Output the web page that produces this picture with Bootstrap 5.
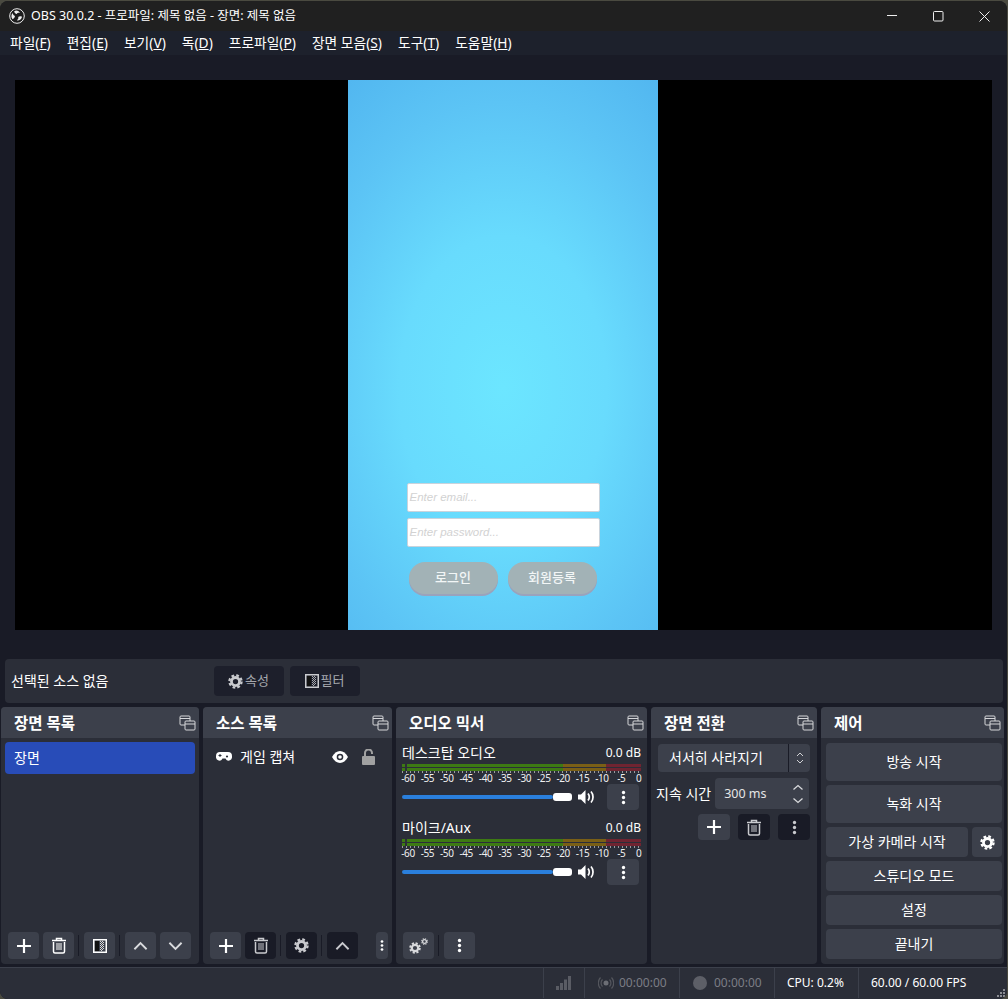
<!doctype html>
<html lang="ko"><head><meta charset="utf-8"><title>OBS</title>
<link rel="stylesheet" href="https://cdn.jsdelivr.net/npm/bootstrap@5.3.0/dist/css/bootstrap.min.css">
<style>
html,body{height:999px;overflow:hidden;background:#4a4a40;}
body{font-family:"Noto Sans","Noto Sans CJK KR",sans-serif;font-size:14px;line-height:18px;color:#fff;}
.app{width:1007px;height:998px;margin-top:1px;background:#191b26;border-radius:8px;overflow:hidden;}
.tbar{height:30px;background:#202020;font-size:12.5px;padding-left:9px;flex:none;}
.tbar svg.logo{margin-right:6px}
.wbtns{margin-left:auto}
.wbtn{width:46px;height:30px;display:flex;align-items:center;justify-content:center}
.mbar{height:24px;background:#1d212c;padding:0 2px 1px;flex:none;flex-wrap:nowrap;justify-content:flex-start}
.mitem{padding:0 8px;color:#fff;font-size:13.75px;line-height:24px;white-space:nowrap}
.previewwrap{height:604px;padding:25px 15px 28px;flex:none}
.preview{height:550px;background:#000;width:977px}
.phone{width:310px;height:550px;margin-right:2px;background:radial-gradient(ellipse 260px 380px at 50% 56%,#6ce6ff 0%,#68dbfd 40%,#5cc4f5 75%,#52b7f0 100%);padding:403px 58px 0 59px;}
.fakeinput{height:29px;width:193px;background:#fff;border:1px solid #c9d3dc;border-radius:2px;color:#d2d2d2;font-style:italic;font-size:11.5px;line-height:27px;padding:0 2px;margin-bottom:6px;font-family:"Liberation Sans",sans-serif}
.pbtns{margin-top:15px;padding-left:2px;gap:10px}
.pbtn{width:89px;height:32px;border-radius:16px;background:#a2b2b6;box-shadow:0 2px 0 #9aa3bc;color:#f2f6f6;font-size:13px;font-weight:500;line-height:30px;text-align:center;}
.propbar{height:44px;margin:0 4px 4px 5px;background:#2b2e38;border-radius:4px;padding:0 6px;flex:none}
.proptext{width:203px}
.darkbtn{width:70px;height:30px;background:#1d1f2b;border-radius:4px;color:#a5a7ad;display:flex;align-items:center;justify-content:center;gap:2px;margin-right:6px;padding:0 1px 0 0;border:0;font-size:13px}
.docks{height:257px;gap:4px;padding-left:1px;flex:none}
.dock{background:#2b2e38;border:0;border-radius:4px;height:257px;color:#fff;--bs-card-bg:#2b2e38}
.d1{width:198px}.d2{width:189px}.d3{width:251px}.d4{width:166px}.d5{width:183px}
.dhead{height:31px;background:#3c404b;border:0;border-radius:4px 4px 0 0!important;padding:0 3px 0 13px;display:flex;align-items:center;justify-content:space-between;font-weight:700;font-size:15.5px;}
.dbody{flex:1;min-height:0;display:flex;flex-direction:column;padding:0}
.tool{height:27px;margin:auto 0 5px;display:flex;align-items:center;}
.ib{width:31px;height:27px;background:#3c404b;border:0;border-radius:4px;padding:0;display:flex;align-items:center;justify-content:center;flex:none}
.ib.dk{background:#191b26}
.ib.sm{width:12px;margin-left:18px}
.sep{width:1px;height:21px;background:#191b26;margin:0 5px 0 4px}
.gap4{margin-right:4px}
.listg{margin:4px 4px 0}
.scene{background:#284cb8;color:#fff;border:0;height:32px;border-radius:4px!important;padding:0 9px;line-height:32px}
.srcrow{height:32px;margin-top:3px;padding:0 0 0 13px;display:flex;align-items:center}
.srcrow .nm{margin-left:8px;width:92px}
.mix{padding:6px 6px 0;height:75px}
.mixlab{display:flex;justify-content:space-between;height:18px;padding-right:0}
.mixlab .db{font-size:12px}
.meter{height:7px;margin-top:2px;display:flex;flex-direction:column;gap:1px;width:239px}
.mline{height:3px;background:linear-gradient(90deg,#3d7a13 0 3px,#2b2e38 3px 5px,#3d7a13 5px 67.5%,#7a5f16 67.5% 85.5%,#702431 85.5% 100%);}
.ticks{width:239px;height:2px;background:repeating-linear-gradient(90deg,#9a9ba0 0 1px,transparent 1px 4px)}
.scale{display:grid;grid-template-columns:repeat(13,19.4px);margin-left:-3.7px;font-size:10px;line-height:11px;color:#f0f0f0;letter-spacing:-.4px;text-align:center}
.scale span:last-child{padding-right:4px}
.volrow{display:flex;align-items:center;height:26px;margin-top:0}
.track{width:151px;height:4px;background:#2a7fdc;border-radius:2px}
.knob{width:19px;height:8px;background:#fff;border-radius:3px}
.kb{width:32px;height:26px;margin-left:12px}
.spk{margin-left:6px}
.sel{margin:6px 7px 0;height:28px;background:#3c404b;border-radius:4px;display:flex;align-items:center}
.sel .t{width:131px;padding-left:11px;height:28px;line-height:28px;border-right:1px solid #191b26}
.sel .c{flex:1;display:flex;justify-content:center}
.durrow{display:flex;align-items:center;margin:6px 0 0 5px}
.spin{width:94px;height:31px;background:#3c404b;border-radius:4px;margin-left:4px;display:flex;align-items:center;justify-content:space-between;padding:0 5px 0 9px;font-size:12.5px;color:#e6e6e6}
.tbtns{display:flex;justify-content:flex-end;gap:8px;margin:5px 7px 0 0}
.tbtns .ib{width:32px;height:26px}
.ctrl{padding:5px 2px 5px 5px;display:flex;flex-direction:column;gap:4px}
.cb{background:#3c404b;border:0;border-radius:4px;color:#fff;font-size:14px;padding:0;width:176px;height:30px;display:block;text-align:center;line-height:30px}
.cb.tall{height:38px;line-height:38px}
.status{height:31px;margin-top:3px;background:#2b2e38;border-top:1px solid #3c404b;font-size:12px;padding:0;flex:1;color:#fff}
.cell{height:30px;border-left:1px solid #3c404b;display:flex;align-items:center;flex:none}
.gray{color:#7b7d85}
.grip{margin-left:auto;align-self:flex-end;margin-right:1px;margin-bottom:1px}
.icogap{margin-right:5px}
.icogap2{margin-right:7px}
</style></head><body>
<svg width="0" height="0" class="d-none"><defs>
<symbol id="float" viewBox="0 0 17 16"><rect x="1" y="1" width="10" height="9" rx="1" fill="#3c404b" stroke="#d5d6d9" stroke-width="1"/><path d="M1 3.500h10" stroke="#d5d6d9"/><rect x="6" y="6" width="10" height="9" rx="1" fill="#3c404b" stroke="#d5d6d9"/><path d="M6 9h10" stroke="#d5d6d9"/></symbol>
<symbol id="plus" viewBox="0 0 16 16"><path d="M8 1v14M1 8h14" stroke="currentColor" stroke-width="2.200" fill="none"/></symbol>
<symbol id="trash" viewBox="0 0 16 17"><path d="M1 3.500h14M5.500 3V1.500h5V3" stroke="currentColor" stroke-width="1.500" fill="none"/><path d="M2.500 5v9.500c0 .8.600 1.500 1.500 1.500h8c.9 0 1.500-.7 1.500-1.500V5" stroke="currentColor" stroke-width="1.500" fill="none"/><path d="M6 6v7M8 6v7M10 6v7" stroke="currentColor" stroke-width="1" fill="none"/></symbol>
<symbol id="gear" viewBox="0 0 16 16"><circle cx="8" cy="8" r="4.300" fill="none" stroke="currentColor" stroke-width="3"/><circle cx="8" cy="8" r="6.500" fill="none" stroke="currentColor" stroke-width="2.400" stroke-dasharray="2.900 2.205"/></symbol>
<symbol id="up" viewBox="0 0 16 10"><path d="M1.500 8.500 8 2l6.500 6.500" fill="none" stroke="currentColor" stroke-width="2"/></symbol>
<symbol id="down" viewBox="0 0 16 10"><path d="M1.500 1.500 8 8l6.500-6.500" fill="none" stroke="currentColor" stroke-width="2"/></symbol>
<symbol id="kebab" viewBox="0 0 6 18"><circle cx="3" cy="3" r="2"  fill="currentColor"/><circle cx="3" cy="9" r="2" fill="currentColor"/><circle cx="3" cy="15" r="2" fill="currentColor"/></symbol>
<symbol id="filt" viewBox="0 0 14 14"><rect x=".75" y=".75" width="12.500" height="12.500" fill="none" stroke="currentColor" stroke-width="1.500"/><rect x="2" y="2" width="4" height="10" fill="#111"/><path d="M7 2.500h1M9 2.500h1M7 4.500h1M9 4.500h1M7 6.500h1M9 6.500h1M7 8.500h1M9 8.500h1M7 10.500h1M9 10.500h1M8 3.500h1M10 3.500h1M8 5.500h1M10 5.500h1M8 7.500h1M10 7.500h1M8 9.500h1M10 9.500h1M8 11.500h1" stroke="currentColor" stroke-width="1" opacity=".8"/></symbol>
<symbol id="spk" viewBox="0 0 17 16"><path d="M0 5.500h3L7.500 1v14L3 10.500H0z" fill="#fff"/><path d="M10 4.500c1.500 2 1.500 5 0 7M13 2.500c2.700 3 2.700 8 0 11" fill="none" stroke="#fff" stroke-width="1.700"/></symbol>
<symbol id="cog2" viewBox="0 0 20 16"><g color="#d8d9dc"><use href="#gear" x="0" y="4" width="12" height="12"/><use href="#gear" x="12" y="0" width="7" height="7"/></g></symbol>
</defs></svg>

<div class="app d-flex flex-column">
  <div class="tbar d-flex align-items-center">
    <svg class="logo" width="16" height="16" viewBox="0 0 16 16"><circle cx="8" cy="8" r="7.300" fill="#1c1c1c" stroke="#eee" stroke-width="1"/><path d="M5.200 3.200C7 2 10.200 2.500 11 5.200 9.800 4.400 8.300 4.800 7.700 6 6.800 5.600 5.400 5 5.200 3.200zM13 8.800c-.2 2.200-2.500 4.300-5.200 3.400 1.300-.6 1.900-2 1.400-3.200.8-.6 2.200-1.100 3.800-.2zM3.600 11.200C2 9.600 1.900 6.600 4 5.100 3.800 6.500 4.700 7.800 6 8.100c-.1 1-.8 2.600-2.400 3.100z" fill="#eee"/></svg>
    <span>OBS 30.0.2 - 프로파일: 제목 없음 - 장면: 제목 없음</span>
    <div class="wbtns d-flex">
      <div class="wbtn"><svg width="11" height="2"><rect width="10" height="1" fill="#eee"/></svg></div>
      <div class="wbtn"><svg width="11" height="11"><rect x=".5" y=".5" width="9.500" height="9.500" rx="1" fill="none" stroke="#eee"/></svg></div>
      <div class="wbtn"><svg width="11" height="11"><path d="M.5.500l10 10M10.500.500l-10 10" stroke="#eee"/></svg></div>
    </div>
  </div>
  <nav class="navbar mbar d-flex">
    <span class="mitem">파일(<u>F</u>)</span><span class="mitem">편집(<u>E</u>)</span><span class="mitem">보기(<u>V</u>)</span><span class="mitem">독(<u>D</u>)</span><span class="mitem">프로파일(<u>P</u>)</span><span class="mitem">장면 모음(<u>S</u>)</span><span class="mitem">도구(<u>T</u>)</span><span class="mitem">도움말(<u>H</u>)</span>
  </nav>
  <div class="previewwrap">
    <div class="preview d-flex justify-content-center">
      <div class="phone">
        <div class="fakeinput">Enter email...</div>
        <div class="fakeinput">Enter password...</div>
        <div class="pbtns d-flex"><div class="pbtn">로그인</div><div class="pbtn">회원등록</div></div>
      </div>
    </div>
  </div>
  <div class="propbar d-flex align-items-center">
    <div class="proptext">선택된 소스 없음</div>
    <button class="btn darkbtn"><svg width="15" height="15" color="#c9cace"><use href="#gear"/></svg><span>속성</span></button>
    <button class="btn darkbtn"><svg width="14" height="14" color="#c9cace"><use href="#filt"/></svg><span>필터</span></button>
  </div>
  <div class="docks d-flex">
    <div class="card dock d1">
      <div class="card-header dhead"><span>장면 목록</span><svg width="17" height="16"><use href="#float"/></svg></div>
      <div class="card-body dbody">
        <ul class="list-group listg"><li class="list-group-item scene">장면</li></ul>
        <div class="tool" style="padding-left:7px">
          <button class="btn ib gap4" style="color:#fff"><svg width="16" height="16"><use href="#plus"/></svg></button>
          <button class="btn ib" style="color:#fff"><svg width="16" height="17"><use href="#trash"/></svg></button>
          <span class="sep"></span>
          <button class="btn ib" style="color:#fff"><svg width="14" height="14"><use href="#filt"/></svg></button>
          <span class="sep"></span>
          <button class="btn ib gap4" style="color:#d8d9dc"><svg width="15" height="10"><use href="#up"/></svg></button>
          <button class="btn ib" style="color:#d8d9dc"><svg width="15" height="10"><use href="#down"/></svg></button>
        </div>
      </div>
    </div>
    <div class="card dock d2">
      <div class="card-header dhead"><span>소스 목록</span><svg width="17" height="16"><use href="#float"/></svg></div>
      <div class="card-body dbody">
        <div class="srcrow" style="margin-top:3px">
          <svg width="16" height="10" viewBox="0 0 16 10"><path d="M4 0h8a4 4 0 0 1 4 4v1.500A3.500 3.500 0 0 1 10.500 8L9.500 6.500h-3L5.500 8A3.500 3.500 0 0 1 0 5.500V4a4 4 0 0 1 4-4z" fill="#fff"/><path d="M2.500 3.500h3M4 2v3" stroke="#2b2e38"/><circle cx="11" cy="4.500" r="1.100" fill="#2b2e38"/></svg>
          <span class="nm">게임 캡쳐</span>
          <svg class="me-3" width="16" height="12" viewBox="0 0 16 12" style="margin-left:-.5px"><path d="M0 6c2-3.700 5-6 8-6s6 2.300 8 6c-2 3.700-5 6-8 6S2 9.700 0 6z" fill="#fff"/><circle cx="8" cy="6" r="3.300" fill="#2b2e38"/><circle cx="8" cy="6" r="1.800" fill="#fff"/></svg>
          <svg width="13" height="16" viewBox="0 0 13 16" style="margin-left:-2px"><path d="M3 8V4a3.500 3.500 0 0 1 7 0v1" fill="none" stroke="#a1a1a1" stroke-width="2"/><rect x="0" y="7" width="13" height="9" rx="1" fill="#a1a1a1"/></svg>
        </div>
        <div class="tool" style="padding-left:7px">
          <button class="btn ib gap4" style="color:#fff"><svg width="16" height="16"><use href="#plus"/></svg></button>
          <button class="btn ib dk" style="color:#c9cace"><svg width="16" height="17"><use href="#trash"/></svg></button>
          <span class="sep"></span>
          <button class="btn ib dk" style="color:#c9cace"><svg width="15" height="15"><use href="#gear"/></svg></button>
          <span class="sep"></span>
          <button class="btn ib dk" style="color:#c9cace"><svg width="15" height="10"><use href="#up"/></svg></button>
          <button class="btn ib sm" style="color:#fff"><svg width="4" height="13"><use href="#kebab"/></svg></button>
        </div>
      </div>
    </div>
    <div class="card dock d3">
      <div class="card-header dhead"><span>오디오 믹서</span><svg width="17" height="16"><use href="#float"/></svg></div>
      <div class="card-body dbody">
        <div class="mix">
          <div class="mixlab" style="width:239px"><span>데스크탑 오디오</span><span class="db">0.0 dB</span></div>
          <div class="meter"><div class="mline"></div><div class="mline"></div></div>
          <div class="ticks"></div>
          <div class="scale"><span>-60</span><span>-55</span><span>-50</span><span>-45</span><span>-40</span><span>-35</span><span>-30</span><span>-25</span><span>-20</span><span>-15</span><span>-10</span><span>-5</span><span>0</span></div>
          <div class="volrow"><div class="track"></div><div class="knob"></div><svg class="spk" width="17" height="16"><use href="#spk"/></svg><button class="btn ib kb" style="color:#fff"><svg width="5" height="15"><use href="#kebab"/></svg></button></div>
        </div>
        <div class="mix">
          <div class="mixlab" style="width:239px"><span>마이크/Aux</span><span class="db">0.0 dB</span></div>
          <div class="meter"><div class="mline"></div><div class="mline"></div></div>
          <div class="ticks"></div>
          <div class="scale"><span>-60</span><span>-55</span><span>-50</span><span>-45</span><span>-40</span><span>-35</span><span>-30</span><span>-25</span><span>-20</span><span>-15</span><span>-10</span><span>-5</span><span>0</span></div>
          <div class="volrow"><div class="track"></div><div class="knob"></div><svg class="spk" width="17" height="16"><use href="#spk"/></svg><button class="btn ib kb" style="color:#fff"><svg width="5" height="15"><use href="#kebab"/></svg></button></div>
        </div>
        <div class="tool" style="padding-left:7px">
          <button class="btn ib"><svg width="20" height="16"><use href="#cog2"/></svg></button>
          <span class="sep"></span>
          <button class="btn ib" style="color:#fff"><svg width="5" height="15"><use href="#kebab"/></svg></button>
        </div>
      </div>
    </div>
    <div class="card dock d4">
      <div class="card-header dhead"><span>장면 전환</span><svg width="17" height="16"><use href="#float"/></svg></div>
      <div class="card-body dbody">
        <div class="sel"><span class="t">서서히 사라지기</span><span class="c"><svg width="8" height="14" viewBox="0 0 8 14"><path d="M1 5l3-3 3 3M1 9l3 3 3-3" fill="none" stroke="#d0d1d4"/></svg></span></div>
        <div class="durrow"><span>지속 시간</span><div class="spin"><span>300 ms</span><svg width="12" height="20" viewBox="0 0 12 20"><path d="M1.500 5.500 6 1.500l4.500 4M1.500 14.500l4.500 4 4.500-4" fill="none" stroke="#d8d9dc" stroke-width="1.300"/></svg></div></div>
        <div class="tbtns">
          <button class="btn ib" style="color:#fff"><svg width="16" height="16"><use href="#plus"/></svg></button>
          <button class="btn ib dk" style="color:#c9cace"><svg width="16" height="17"><use href="#trash"/></svg></button>
          <button class="btn ib dk" style="color:#c9cace"><svg width="5" height="15"><use href="#kebab"/></svg></button>
        </div>
      </div>
    </div>
    <div class="card dock d5">
      <div class="card-header dhead"><span>제어</span><svg width="17" height="16"><use href="#float"/></svg></div>
      <div class="card-body dbody ctrl">
        <button class="btn cb tall">방송 시작</button>
        <button class="btn cb tall">녹화 시작</button>
        <div class="d-flex gap-1"><button class="btn cb" style="width:142px">가상 카메라 시작</button><button class="btn ib" style="width:30px;height:30px;color:#fff"><svg width="15" height="15"><use href="#gear"/></svg></button></div>
        <button class="btn cb">스튜디오 모드</button>
        <button class="btn cb">설정</button>
        <button class="btn cb">끝내기</button>
      </div>
    </div>
  </div>
  <div class="status d-flex">
    <div style="width:543px"></div>
    <div class="cell" style="width:41px;justify-content:center"><svg width="16" height="14" viewBox="0 0 16 14" fill="#5a5c64"><rect x="0" y="10" width="3" height="4"/><rect x="4" y="7" width="3" height="7"/><rect x="8" y="3.500" width="3" height="10.500"/><rect x="12" y="0" width="3" height="14"/></svg></div>
    <div class="cell gray" style="width:95px;padding-left:13px"><svg width="16" height="14" viewBox="0 0 16 14" class="icogap"><circle cx="8" cy="7" r="2.500" fill="#6c6e75"/><path d="M4.500 3.500a5 5 0 0 0 0 7M11.500 3.500a5 5 0 0 1 0 7M2.500 1.500a8 8 0 0 0 0 11M13.500 1.500a8 8 0 0 1 0 11" fill="none" stroke="#55575e" stroke-width="1.200"/></svg><span>00:00:00</span></div>
    <div class="cell gray" style="width:95px;padding-left:13px"><svg width="14" height="14" class="icogap2"><circle cx="7" cy="7" r="7" fill="#5d5f67"/></svg><span>00:00:00</span></div>
    <div class="cell" style="width:84px;padding-left:12px">CPU: 0.2%</div>
    <div class="cell" style="width:135px;padding-left:12px">60.00 / 60.00 FPS</div>
    <svg class="grip" width="9" height="9" viewBox="0 0 9 9" fill="#8a8c92"><rect x="6" y="0" width="2" height="2"/><rect x="3" y="3" width="2" height="2"/><rect x="6" y="3" width="2" height="2"/><rect x="0" y="6" width="2" height="2"/><rect x="3" y="6" width="2" height="2"/><rect x="6" y="6" width="2" height="2"/></svg>
  </div>
</div>
<script src="https://cdn.jsdelivr.net/npm/bootstrap@5.3.0/dist/js/bootstrap.bundle.min.js"></script>
</body></html>
